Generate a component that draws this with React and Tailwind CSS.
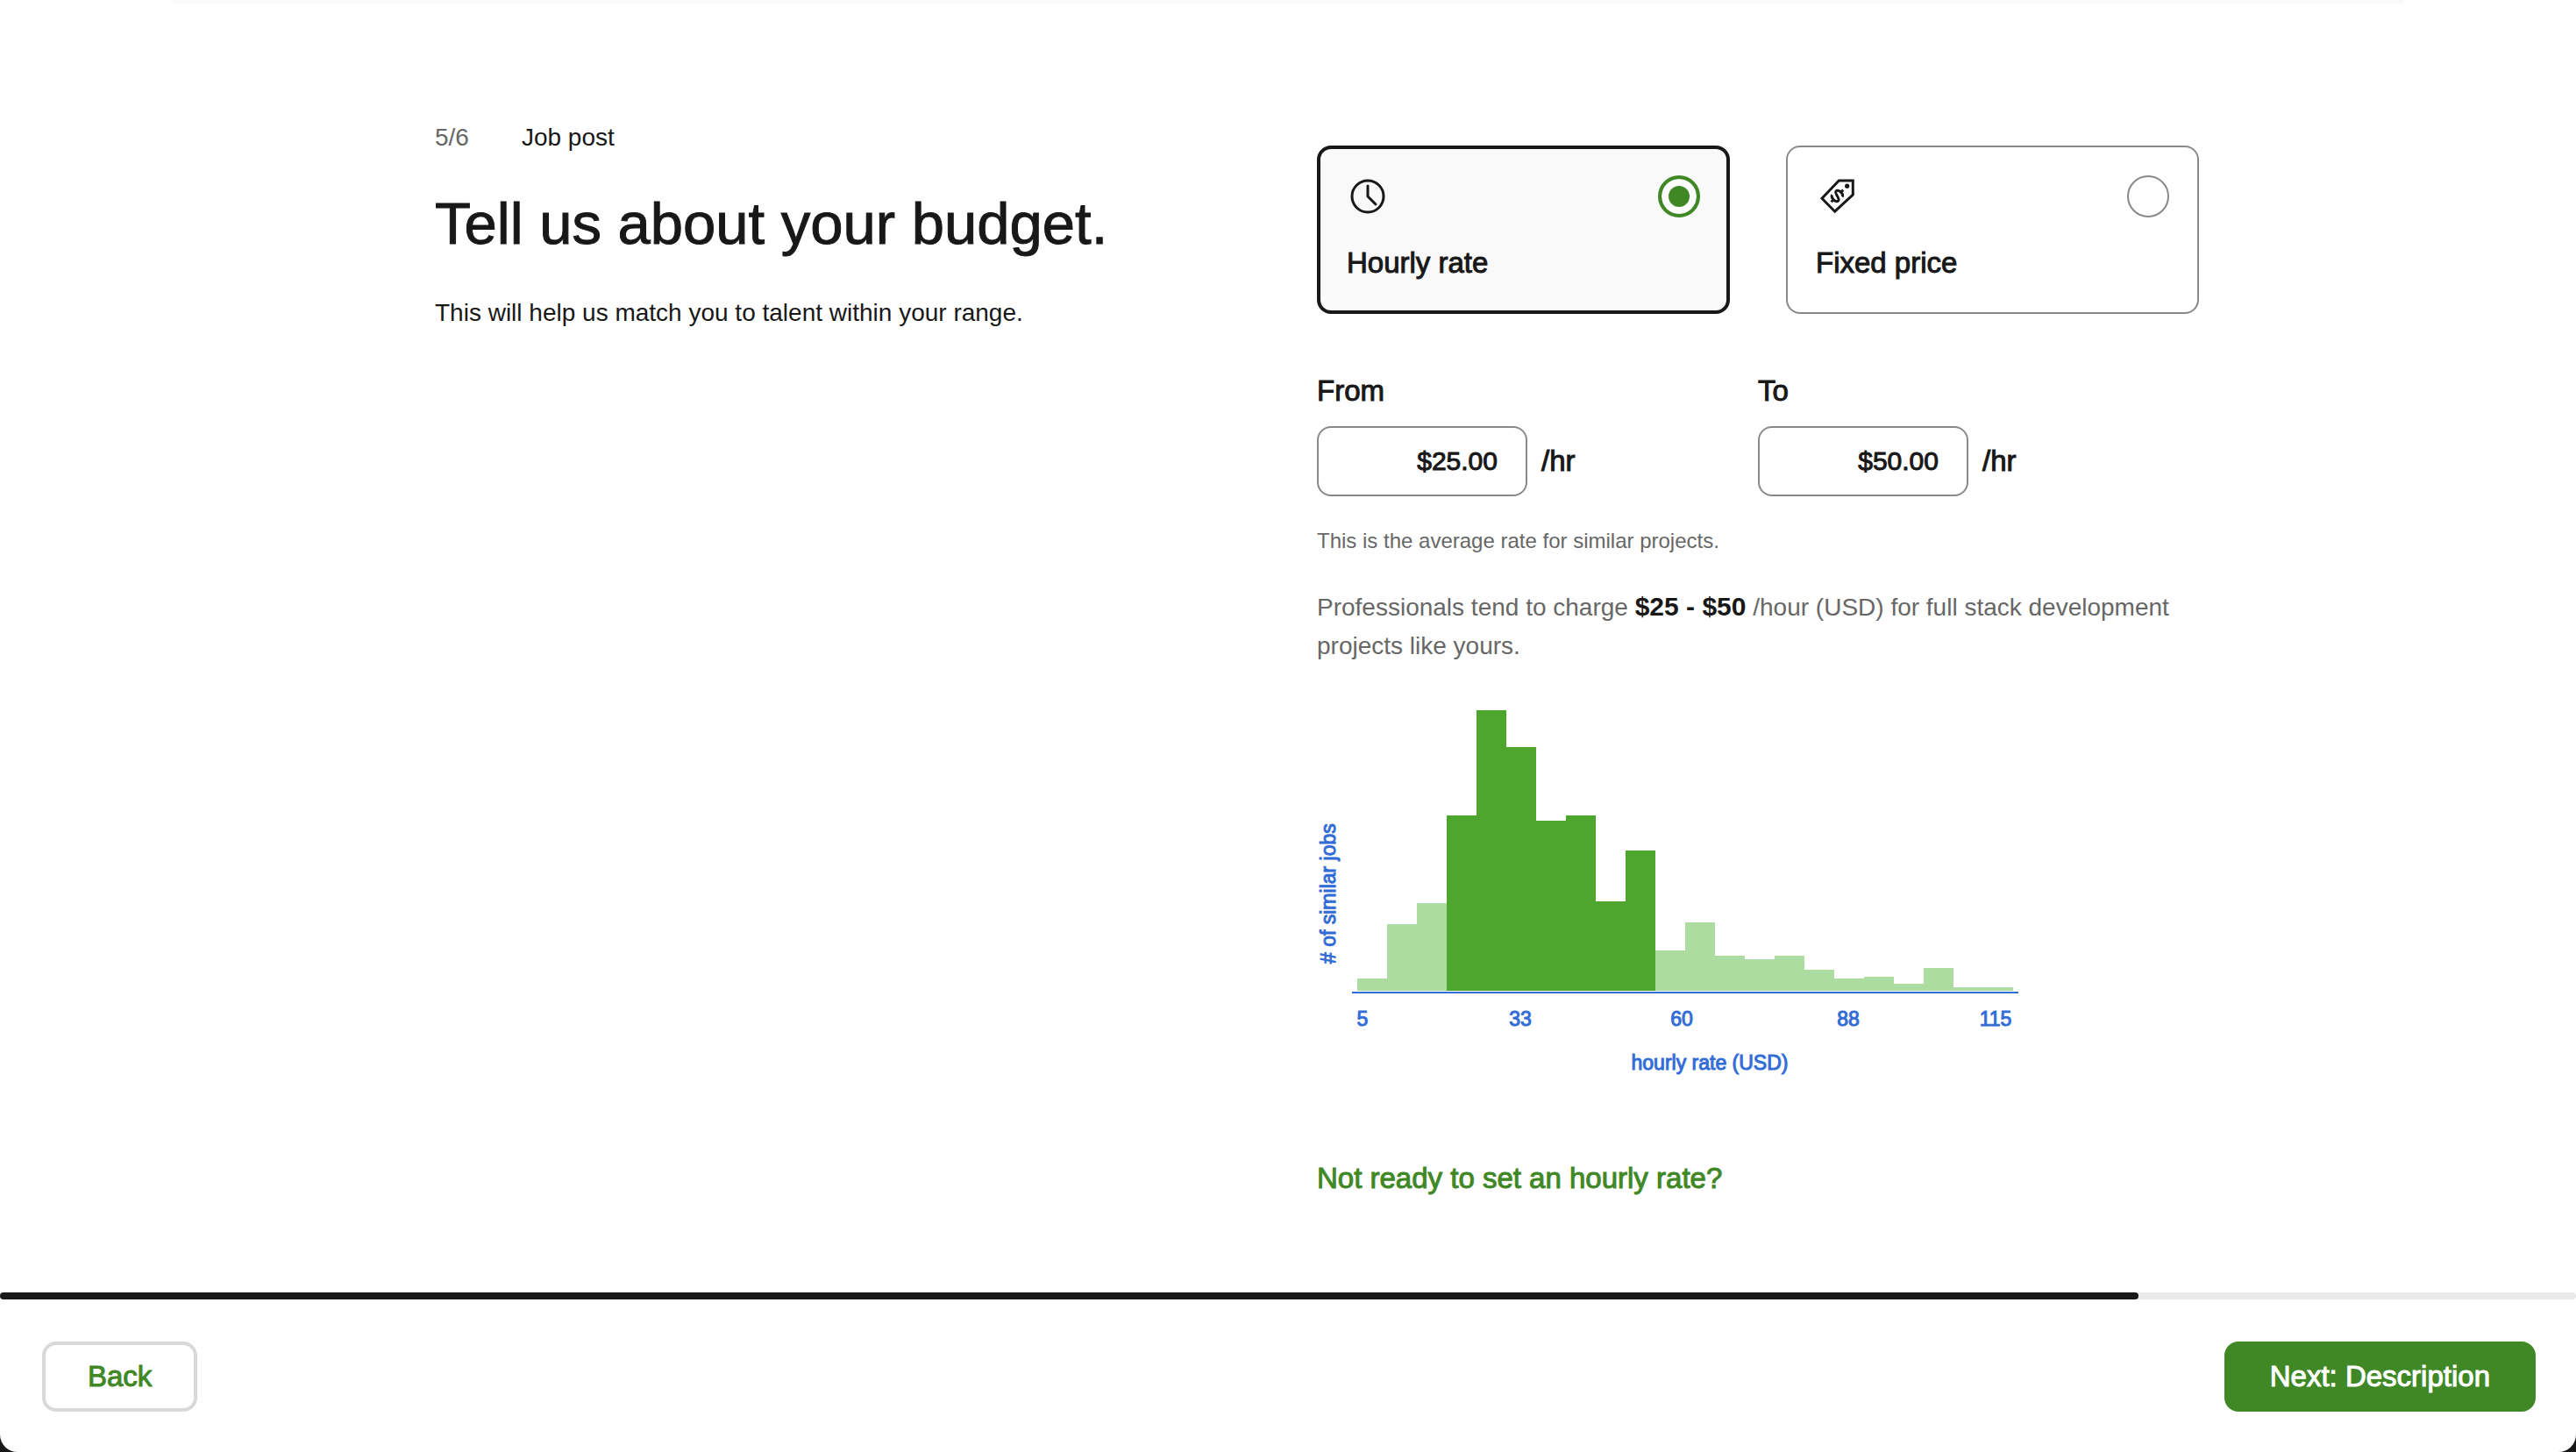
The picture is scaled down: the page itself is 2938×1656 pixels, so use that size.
import { useState } from "react";

const bars = [14, 76, 100, 200, 320, 278, 194, 200, 102, 160, 46, 78, 40, 36, 40, 24, 14, 16, 8, 26, 4, 4];

const ticks = [
  { label: "5", x: 52 },
  { label: "33", x: 232 },
  { label: "60", x: 416 },
  { label: "88", x: 606 },
  { label: "115", x: 774 },
];

function ClockIcon() {
  return (
    <svg aria-hidden="true" className="size-12" viewBox="0 0 48 48" fill="none" stroke="currentColor" strokeWidth="3" strokeLinecap="round" strokeLinejoin="round">
      <circle cx="24" cy="24" r="18" />
      <path d="M24 12v12l9 9" />
    </svg>
  );
}

function PriceTagIcon() {
  return (
    <svg aria-hidden="true" className="size-12" viewBox="0 0 48 48" fill="none" stroke="currentColor" strokeWidth="3">
      <path d="M26.3 6H42.3V22L21.7 41.2L7 26.2Z" />
      <circle cx="35.7" cy="12.2" r="2.6" fill="currentColor" stroke="none" />
      <g transform="translate(24.4 23.4) rotate(45)">
        <path d="M4.8 -3.2C4.4 -6.8 -4.8 -7 -4.8 -3C-4.8 0.6 4.8 -0.6 4.8 3C4.8 7 -4.4 6.8 -4.8 3.2M0 -9.6V-5.6M0 5.6V9.6" />
      </g>
    </svg>
  );
}

function RateOption({ value, label, icon, selected, onSelect }) {
  const frame = selected ? "border-4 border-[#181818] bg-[#f9f9f9] p-[30px]" : "border-2 border-[#898989] bg-white p-8";
  return (
    <label className={`flex cursor-pointer flex-col gap-7 rounded-2xl ${frame}`}>
      <span className="flex items-center justify-between">
        {icon}
        <input
          type="radio"
          name="rate-type"
          value={value}
          checked={selected}
          onChange={onSelect}
          className="size-12 appearance-none rounded-full border-2 border-[#898989] bg-white checked:border-4 checked:border-[#408826] checked:bg-[#408826] checked:shadow-[inset_0_0_0_8px_white]"
        />
      </span>
      <span className="text-[33px] leading-[48px] [-webkit-text-stroke:1px]">{label}</span>
    </label>
  );
}

function RateField({ id, label, value }) {
  return (
    <div className="flex flex-col gap-4">
      <label htmlFor={id} className="text-[33px] leading-[48px] [-webkit-text-stroke:1px]">
        {label}
      </label>
      <div className="flex items-center gap-4">
        <input
          id={id}
          type="text"
          defaultValue={value}
          className="h-20 w-60 rounded-2xl border-2 border-[#898989] px-8 text-right text-[30px] [-webkit-text-stroke:1px]"
        />
        <span className="text-[33px] leading-[48px] [-webkit-text-stroke:1px]">/hr</span>
      </div>
    </div>
  );
}

function RateChart() {
  return (
    <svg role="img" aria-label="Hourly rates of similar jobs" className="h-[442px] w-[802px] text-[23px]" viewBox="0 0 802 442">
      {bars.map((h, i) => (
        <rect key={i} x={46 + i * 34} y={332 - h} width="34" height={h} shapeRendering="crispEdges" fill={i >= 3 && i <= 9 ? "#4ea62e" : "#addca0"} />
      ))}
      <rect x="40" y="333" width="760" height="2" fill="#326cd6" />
      <g fill="#326cd6" stroke="#326cd6" strokeWidth="1">
        <text transform="translate(21 301) rotate(-90)"># of similar jobs</text>
        {ticks.map((t) => (
          <text key={t.label} x={t.x} y="372" textAnchor="middle">
            {t.label}
          </text>
        ))}
        <text x="448" y="422" textAnchor="middle">
          hourly rate (USD)
        </text>
      </g>
    </svg>
  );
}

export default function App() {
  const [rateType, setRateType] = useState("hourly");
  return (
    <div className="bg-[#181818]">
      <div className="flex min-h-screen flex-col rounded-b-[20px] bg-white font-['Liberation_Sans',Arial,sans-serif] text-[#181818]">
        <div className="mx-auto h-1 w-full max-w-[2546px] rounded-b-2xl bg-[#f9f9f9]" />

        <main className="mx-auto grid w-full max-w-[2078px] grid-cols-2 pl-[66px]">
          <section className="pt-[131px]">
            <div className="flex gap-[60px] text-[28px] leading-[44px]">
              <span className="text-[#676767]">5/6</span>
              <span>Job post</span>
            </div>
            <h1 className="mt-9 text-[67px] leading-[80px] [-webkit-text-stroke:1px]">Tell us about your budget.</h1>
            <p className="mt-10 text-[28px] leading-[44px]">This will help us match you to talent within your range.</p>
          </section>

          <section className="pt-[162px]">
            <div className="grid grid-cols-2 gap-16">
              <RateOption value="hourly" label="Hourly rate" icon={<ClockIcon />} selected={rateType === "hourly"} onSelect={() => setRateType("hourly")} />
              <RateOption value="fixed" label="Fixed price" icon={<PriceTagIcon />} selected={rateType === "fixed"} onSelect={() => setRateType("fixed")} />
            </div>

            <div className="mt-16 grid grid-cols-2">
              <RateField id="rate-from" label="From" value="$25.00" />
              <RateField id="rate-to" label="To" value="$50.00" />
            </div>

            <p className="mt-8 text-[24px] leading-[38px] text-[#676767]">This is the average rate for similar projects.</p>
            <p className="mt-[34px] text-[28px] leading-[44px] text-[#676767]">
              Professionals tend to charge <strong className="text-[30px] font-bold text-[#181818]">$25 - $50</strong> /hour (USD) for full stack development projects like yours.
            </p>

            <div className="mt-[39px]">
              <RateChart />
            </div>

            <a href="#skip-rate" className="mt-20 inline-block text-[33px] leading-[48px] text-[#408826] [-webkit-text-stroke:1px]">
              Not ready to set an hourly rate?
            </a>
          </section>
        </main>

        <footer className="mt-auto">
          <div role="progressbar" aria-label="Job post progress" aria-valuemin={0} aria-valuemax={6} aria-valuenow={5} className="h-2 rounded-full bg-[#e9e9e9]">
            <div className="h-2 w-[83%] rounded-full bg-[#181818]" />
          </div>
          <div className="flex items-center justify-between pt-12 pr-[46px] pb-[46px] pl-12">
            <button type="button" className="h-20 rounded-2xl border-4 border-[#d9d9d9] px-12 text-[33px] text-[#408826] [-webkit-text-stroke:1px]">
              Back
            </button>
            <button type="button" className="h-20 rounded-2xl border-4 border-[#408826] bg-[#408826] px-12 text-[33px] text-white [-webkit-text-stroke:1px]">
              Next: Description
            </button>
          </div>
        </footer>
      </div>
    </div>
  );
}
